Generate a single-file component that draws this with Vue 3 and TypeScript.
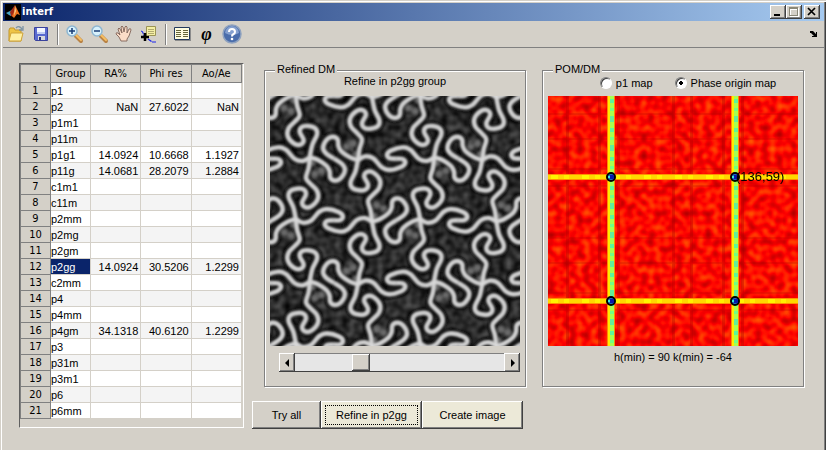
<script setup lang="ts">
import { ref } from 'vue'

interface Row {
  group: string
  ra?: string
  phi?: string
  ao?: string
}

const rows: Row[] = [
  { group: 'p1' },
  { group: 'p2', ra: 'NaN', phi: '27.6022', ao: 'NaN' },
  { group: 'p1m1' },
  { group: 'p11m' },
  { group: 'p1g1', ra: '14.0924', phi: '10.6668', ao: '1.1927' },
  { group: 'p11g', ra: '14.0681', phi: '28.2079', ao: '1.2884' },
  { group: 'c1m1' },
  { group: 'c11m' },
  { group: 'p2mm' },
  { group: 'p2mg' },
  { group: 'p2gm' },
  { group: 'p2gg', ra: '14.0924', phi: '30.5206', ao: '1.2299' },
  { group: 'c2mm' },
  { group: 'p4' },
  { group: 'p4mm' },
  { group: 'p4gm', ra: '34.1318', phi: '40.6120', ao: '1.2299' },
  { group: 'p3' },
  { group: 'p31m' },
  { group: 'p3m1' },
  { group: 'p6' },
  { group: 'p6mm' },
]

const selected = ref('p2gg')
const slice = ref(30)
const mapMode = ref('phase')

// Symmetry operations of the p2gg cell (cell edge 373 units, three units per pixel)
const cell = 373
const operations = [
  'matrix(1 0 0 1 0 0)',
  'matrix(-1 0 0 -1 384 376)',
  'matrix(1 0 0 -1 186 188)',
  'matrix(-1 0 0 1 570 -188)',
]
const copies: string[] = []
for (let i = -2; i <= 2; i++) {
  for (let j = -1; j <= 2; j++) {
    for (const op of operations) copies.push(`translate(${i * cell} ${j * cell}) ${op}`)
  }
}

// Smooth curve through a list of points (Catmull-Rom)
function curve(points: number[][]): string {
  let d = `M${points[0][0]} ${points[0][1]}`
  for (let i = 0; i < points.length - 1; i++) {
    const a = points[Math.max(0, i - 1)]
    const b = points[i]
    const c = points[i + 1]
    const e = points[Math.min(points.length - 1, i + 2)]
    d += `C${b[0] + (c[0] - a[0]) / 6} ${b[1] + (c[1] - a[1]) / 6} ${c[0] - (e[0] - b[0]) / 6} ${c[1] - (e[1] - b[1]) / 6} ${c[0]} ${c[1]}`
  }
  return d
}

const motif = [
  curve([[192, 188], [168, 172], [159, 155], [170, 131], [188, 122], [203, 130], [205, 150], [214, 166], [240, 184], [264, 192]]),
  curve([[264, 192], [285, 181], [310, 187], [335, 214], [358, 222], [393, 213], [406, 200], [398, 189], [378, 188]]),
  curve([[264, 192], [268, 160], [276, 130], [262, 112], [243, 92], [240, 68], [258, 46], [278, 42], [288, 56], [276, 80], [282, 95], [302, 98], [324, 90], [328, 72], [314, 42], [306, 4]]),
].join('')

const darkColumns = [19, 51, 70, 125, 143, 175, 194]
const darkRows = [18, 43, 73, 90, 142, 167, 197, 214]
const peaks = [
  { x: 63, y: 81 },
  { x: 187, y: 81 },
  { x: 63, y: 205 },
  { x: 187, y: 205 },
]
</script>

<template>
  <div class="window">
    <header class="titlebar">
      <svg class="app-icon" viewBox="0 0 16 16" aria-hidden="true">
        <rect width="16" height="16" fill="#000" />
        <path d="M1 9 5 7 8 5 6 12 4 11Z" fill="#4aa5c4" />
        <path d="M5 8 10 1 9 13 6 12Z" fill="#a52a16" />
        <path d="M10 1 12 5 15 11 12 10 9 14 7 12 9 8Z" fill="#ee7420" />
        <path d="M10 2 11 7 9 12Z" fill="#ffd08a" />
      </svg>
      <h1>interf</h1>
      <div class="window-buttons">
        <button type="button" aria-label="Minimize">
          <svg viewBox="0 0 12 10"><path d="M2 7h6v2H2z" fill="#000" /></svg>
        </button>
        <button type="button" aria-label="Maximize" disabled>
          <svg viewBox="0 0 12 10"><path d="M2 1h9v9H2zM3 3v6h7V3z" fill="#fff" fill-rule="evenodd" /><path d="M1 0h9v9H1zM2 2v6h7V2z" fill="#8b8878" fill-rule="evenodd" /></svg>
        </button>
        <button type="button" class="close" aria-label="Close">
          <svg viewBox="0 0 12 10"><path d="M2 1 9 8M9 1 2 8" stroke="#000" stroke-width="1.7" /></svg>
        </button>
      </div>
    </header>

    <nav class="toolbar" aria-label="Tools">
      <button type="button" aria-label="Open">
        <svg viewBox="0 0 20 20">
          <path d="M3 6 4 4h4l1 2h6v11H3z" fill="#eec445" stroke="#c1952a" />
          <path d="M3 17 5 9h12l-2 8z" fill="#fff0a2" stroke="#cfa338" />
          <path d="M10 4q3-3 6 1m1-3v4h-4" fill="none" stroke="#7c93a4" stroke-width="1.3" />
        </svg>
      </button>
      <button type="button" aria-label="Save">
        <svg viewBox="0 0 20 20">
          <path d="M3.500 3.500h13v13h-12l-1-1z" fill="#5b6ad0" stroke="#3a429c" />
          <path d="M6 4h8v6H6z" fill="#f4f6ff" />
          <path d="M6 8h8v2H6z" fill="#c3cef4" />
          <path d="M7 12h7v4H7z" fill="#d8d8dc" />
          <path d="M8 13h2v3H8z" fill="#26307c" />
        </svg>
      </button>
      <span class="separator"></span>
      <button type="button" aria-label="Zoom in">
        <svg viewBox="0 0 20 20">
          <path d="m12 12 5 5" stroke="#b98244" stroke-width="4" stroke-linecap="round" />
          <path d="m12 11 5 5" stroke="#f6bf62" stroke-width="2" stroke-linecap="round" />
          <circle cx="8" cy="7" r="5" fill="#d7f1fc" stroke="#8db6d1" stroke-width="1.5" />
          <path d="M5 7h6M8 4v6" stroke="#193d76" stroke-width="1.5" />
        </svg>
      </button>
      <button type="button" aria-label="Zoom out">
        <svg viewBox="0 0 20 20">
          <path d="m12 12 5 5" stroke="#b98244" stroke-width="4" stroke-linecap="round" />
          <path d="m12 11 5 5" stroke="#f6bf62" stroke-width="2" stroke-linecap="round" />
          <circle cx="8" cy="7" r="5" fill="#d7f1fc" stroke="#8db6d1" stroke-width="1.5" />
          <path d="M5 7h6" stroke="#193d76" stroke-width="1.5" />
        </svg>
      </button>
      <button type="button" aria-label="Pan">
        <svg viewBox="0 0 20 20">
          <path d="M7 17 5 13 2 10q0-2 2-1l2 2-2-6q1-2 2 0l2 4-1-6q1-2 2 0l1 5 1-5q1-2 2 0v6l2-4q2-1 2 1l-2 6-2 3v2z" fill="#fbdcc7" stroke="#7f6257" stroke-width=".9" />
        </svg>
      </button>
      <button type="button" aria-label="Data cursor">
        <svg viewBox="0 0 20 20">
          <path d="M2 7q2 0 3 5m4 3q3 2 4 3h5" fill="none" stroke="#1a24ee" stroke-width="1.2" stroke-dasharray="4 1" />
          <path d="M7.500 2.500h9v9h-6l-3 2z" fill="#f4efa4" stroke="#9b9455" />
          <path d="M9 5.500h6M9 7.500h6M9 9.500h6" stroke="#b3ab70" />
          <path d="M2 13h8M6 9v8" stroke="#000" stroke-width="2.5" />
        </svg>
      </button>
      <span class="separator"></span>
      <button type="button" aria-label="Table">
        <svg viewBox="0 0 20 20">
          <path d="M2.500 3.500h15v12h-15z" fill="#fffde0" stroke="#23395e" />
          <path d="M3 16.500h15M18.500 4v13" stroke="#8c8c8c" />
          <path d="M4 6.500h5M4 8.500h5M4 10.500h5M4 12.500h5M11 6.500h5M11 8.500h5M11 10.500h5M11 12.500h5" stroke="#66663a" />
        </svg>
      </button>
      <button type="button" class="phi" aria-label="Phase">φ</button>
      <button type="button" aria-label="Help">
        <svg viewBox="0 0 20 20">
          <circle cx="10" cy="10" r="9" fill="#4a6dab" stroke="#8fa2bf" stroke-width="1.5" />
          <path d="M3 9a7 7 0 0 1 14 0q-7 4-14 0" fill="#85a0cf" />
          <path d="M7 8q0-3 3-3t3 3q0 1.500-2 2.500-1 .5-1 2" fill="none" stroke="#fff" stroke-width="2" />
          <circle cx="10" cy="15" r="1.300" fill="#fff" />
        </svg>
      </button>
      <button type="button" class="dock" aria-label="Dock">
        <svg viewBox="0 0 8 8"><path d="M0 1h3l3 3V2h1v5H2V6h2L1 3H0z" fill="#000" /></svg>
      </button>
    </nav>

    <main class="content">
      <div class="table-frame">
        <table>
          <thead>
            <tr>
              <th class="index"></th>
              <th class="group">Group</th>
              <th>RA%</th>
              <th>Phi res</th>
              <th>Ao/Ae</th>
            </tr>
          </thead>
          <tbody>
            <tr v-for="(row, i) in rows" :key="row.group">
              <th scope="row">{{ i + 1 }}</th>
              <td class="name" :class="{ selected: row.group === selected }" @click="selected = row.group">{{ row.group }}</td>
              <td>{{ row.ra }}</td>
              <td>{{ row.phi }}</td>
              <td>{{ row.ao }}</td>
            </tr>
          </tbody>
        </table>
      </div>

      <div class="workspace">
        <div class="panels">
          <fieldset>
            <legend>Refined DM</legend>
            <div class="panel-head">Refine in p2gg group</div>
            <svg class="plot" viewBox="0 0 250 250" role="img" aria-label="Refined density map">
              <defs>
                <path id="motif" :d="motif" />
                <filter id="soft" x="0" y="0" width="750" height="750" filterUnits="userSpaceOnUse"><feGaussianBlur stdDeviation="2.4" /></filter>
                <filter id="halo" x="0" y="0" width="750" height="750" filterUnits="userSpaceOnUse"><feGaussianBlur stdDeviation="4" /></filter>
                <filter id="grain" x="0" y="0" width="1" height="1" color-interpolation-filters="sRGB">
                  <feTurbulence type="fractalNoise" baseFrequency=".14" numOctaves="1" seed="4" />
                  <feColorMatrix values=".45 0 0 0 -.05 .45 0 0 0 -.05 .45 0 0 0 -.05 0 0 0 0 1" />
                </filter>
              </defs>
              <rect width="250" height="250" filter="url(#grain)" />
              <g transform="scale(.3333)" fill="none" stroke-linejoin="round">
                <g filter="url(#halo)" stroke="#080808" stroke-width="32" opacity=".8">
                  <use v-for="(t, i) in copies" :key="i" href="#motif" :transform="t" />
                </g>
                <g filter="url(#halo)" fill="#6c6c6c" stroke="none">
                  <g v-for="(t, i) in copies" :key="i" :transform="t">
                    <circle cx="250" cy="142" r="11" />
                    <circle cx="229" cy="152" r="11" />
                    <circle cx="256" cy="174" r="9" />
                  </g>
                </g>
                <g filter="url(#soft)" stroke="#bcbcbc" stroke-width="14">
                  <use v-for="(t, i) in copies" :key="i" href="#motif" :transform="t" />
                </g>
                <g filter="url(#soft)" stroke="#f4f4f4" stroke-width="6" opacity=".6">
                  <use v-for="(t, i) in copies" :key="i" href="#motif" :transform="t" />
                </g>
              </g>
            </svg>
            <div class="slider">
              <button type="button" aria-label="Previous"><svg viewBox="0 0 5 8"><path d="M4 0v8L0 4z" /></svg></button>
              <input v-model="slice" type="range" min="0" max="100" aria-label="Slice" />
              <button type="button" aria-label="Next"><svg viewBox="0 0 5 8"><path d="M1 0v8l4-4z" /></svg></button>
            </div>
          </fieldset>

          <fieldset>
            <legend>POM/DM</legend>
            <div class="panel-head radios">
              <label><input v-model="mapMode" type="radio" name="map" value="p1" />p1 map</label>
              <label><input v-model="mapMode" type="radio" name="map" value="phase" />Phase origin map</label>
            </div>
            <svg class="plot" viewBox="0 0 250 250" role="img" aria-label="Phase origin map">
              <defs>
                <filter id="heat" x="0" y="0" width="1" height="1" color-interpolation-filters="sRGB">
                  <feTurbulence type="fractalNoise" baseFrequency=".14" numOctaves="1" seed="8" />
                  <feColorMatrix values=".9 0 0 0 .56 .9 0 0 0 -.42 0 0 0 0 0 0 0 0 0 1" />
                </filter>
                <pattern id="core" width="8" height="29" patternUnits="userSpaceOnUse">
                  <rect width="8" height="29" fill="#a5ff50" />
                  <rect y="3" width="8" height="4" fill="#5cf69b" />
                  <rect y="12" width="8" height="3" fill="#72ff82" />
                  <rect y="20" width="8" height="6" fill="#62ee9a" />
                </pattern>
                <pattern id="band" width="31" height="250" patternUnits="userSpaceOnUse">
                  <rect width="31" height="250" fill="#ffd800" />
                  <rect x="3" width="7" height="250" fill="#fff500" />
                  <rect x="16" width="5" height="250" fill="#fff000" />
                </pattern>
              </defs>
              <rect width="250" height="250" filter="url(#heat)" />
              <g fill="#a80000" opacity=".35">
                <rect v-for="x in darkColumns" :key="x" :x="x - 1" width="3" height="250" />
                <rect v-for="y in darkRows" :key="y" :y="y - 1" width="250" height="2" opacity=".6" />
              </g>
              <g v-for="y in [81, 205]" :key="y">
                <rect :y="y - 3" width="250" height="6" fill="#ff9000" />
                <rect :y="y - 2" width="250" height="4" fill="url(#band)" />
              </g>
              <g v-for="x in [63, 187]" :key="x">
                <rect :x="x - 4" width="8" height="250" fill="#ff8a00" />
                <rect :x="x - 3" width="6" height="250" fill="#ffec00" />
                <rect :x="x - 1" width="4" height="250" fill="url(#core)" />
              </g>
              <g v-for="(p, i) in peaks" :key="i">
                <circle :cx="p.x" :cy="p.y" r="4" fill="#1c6fd6" stroke="#000" stroke-width="2" />
                <rect :x="p.x - 3" :y="p.y - 1" width="2" height="2" fill="#36e9d9" />
                <rect :x="p.x - 1" :y="p.y - 2" width="4" height="4" fill="#0718a8" />
              </g>
              <text x="188" y="85">(136;59)</text>
            </svg>
            <p class="caption">h(min) = 90 k(min) = -64</p>
          </fieldset>
        </div>

        <div class="actions">
          <button type="button">Try all</button>
          <button type="button" class="pale focused">Refine in p2gg</button>
          <button type="button" class="pale">Create image</button>
        </div>
      </div>
    </main>
  </div>
</template>

<style>
body {
  background: #d4d0c8;
}
</style>

<style scoped>
.window,
.window * {
  box-sizing: border-box;
}

.window {
  display: flex;
  flex-direction: column;
  min-height: 100vh;
  padding: 3px 2px 0 3px;
  background: #d4d0c8;
  box-shadow: inset 1px 1px #d4d0c8, inset 2px 2px #fff, inset -1px 0 #404040, inset -2px 0 #808080;
  color: #000;
  font: 11px/12px 'Liberation Sans', Arial, sans-serif;
}

button {
  padding: 0;
  border: 0;
  border-radius: 0;
  background: #d4d0c8;
  color: #000;
  font: inherit;
}

.titlebar {
  display: flex;
  align-items: center;
  height: 18px;
  padding: 0 4px 0 2px;
  background: linear-gradient(90deg, #0a246a, #a6caf0);
}

.app-icon {
  width: 16px;
  height: 16px;
}

h1 {
  flex: 1;
  margin: 0 0 0 1px;
  color: #fff;
  font: bold 11px/16px 'DejaVu Sans Condensed', 'DejaVu Sans', sans-serif;
}

.window-buttons {
  display: flex;
}

.window-buttons button {
  width: 16px;
  height: 14px;
  padding: 2px;
  box-shadow: inset -1px -1px #404040, inset 1px 1px #fff, inset -2px -2px #808080;
}

.window-buttons .close {
  margin-left: 2px;
}

.window-buttons svg {
  display: block;
  width: 12px;
  height: 10px;
}

.toolbar {
  display: flex;
  align-items: center;
  height: 27px;
  border-bottom: 1px solid #808080;
}

.toolbar button {
  display: grid;
  place-items: center;
  width: 25px;
  height: 24px;
}

.toolbar svg {
  width: 20px;
  height: 20px;
}

.separator {
  width: 2px;
  height: 21px;
  margin: 0 2px 0 4px;
  border-left: 1px solid #808080;
  border-right: 1px solid #fff;
}

.toolbar .phi {
  font: italic bold 18px/20px 'Liberation Serif', serif;
}

.toolbar .dock {
  width: 20px;
  margin-left: auto;
}

.dock svg {
  width: 8px;
  height: 8px;
}

.content {
  display: flex;
  align-items: flex-start;
  gap: 8px;
  padding: 15px 20px 20px 16px;
}

.table-frame {
  width: 225px;
  padding: 0 1px 8px 0;
  border: 1px solid;
  border-color: #606060 #fff #fff #606060;
}

table {
  width: 100%;
  border-collapse: collapse;
  table-layout: fixed;
}

.index {
  width: 30px;
}

.group {
  width: 40px;
}

th {
  height: 16px;
  padding: 0;
  border: 1px solid #808080;
  background: #d4d0c8;
  font: 11px/12px 'DejaVu Sans Condensed', 'DejaVu Sans', sans-serif;
}

thead th {
  height: 18px;
}

td {
  height: 16px;
  padding: 0 2px;
  border: 1px solid #d4d0c8;
  background: #fff;
  text-align: right;
  line-height: 12px;
}

tr:nth-child(even) td {
  background: #f4f4f4;
}

td.name {
  text-align: left;
  padding: 0;
}

tr td.selected {
  background: #0a246a;
  color: #fff;
}

.workspace {
  flex: 1;
  min-width: 0;
}

.panels {
  display: grid;
  grid-template-columns: 1fr 1fr;
  gap: 16px;
  padding-left: 12px;
}

fieldset {
  min-width: 0;
  margin: 0;
  padding: 0 5px 14px;
  border: 1px solid #808080;
  box-shadow: inset 1px 1px #fff, 1px 1px #fff;
}

legend {
  height: 14px;
  margin-left: 5px;
  padding: 0 2px;
  background: #d4d0c8;
  line-height: 13px;
}

.panel-head {
  height: 19px;
  line-height: 8px;
  text-align: center;
}

.radios {
  display: flex;
  justify-content: center;
  gap: 22px;
  padding-left: 30px;
}

label {
  display: flex;
  align-items: center;
  gap: 4px;
  height: 12px;
}

input[type='radio'] {
  appearance: none;
  width: 12px;
  height: 12px;
  margin: 0;
  border: 1px solid;
  border-color: #808080 #fff #fff #808080;
  border-radius: 50%;
  background: #fff;
  box-shadow: inset 1px 1px #404040;
}

input[type='radio']:checked {
  background: radial-gradient(circle, #000 2px, #fff 2px);
}

.plot {
  display: block;
  width: 100%;
  height: auto;
  overflow: hidden;
}

.plot text {
  font: 13px 'Liberation Sans', Arial, sans-serif;
}

.slider {
  display: flex;
  height: 19px;
  margin: 7px 0 0 9px;
}

.slider button {
  display: grid;
  place-items: center;
  width: 16px;
  box-shadow: inset -1px -1px #404040, inset 1px 1px #fff, inset -2px -2px #808080;
}

.slider svg {
  width: 5px;
  height: 8px;
}

.slider input {
  appearance: none;
  flex: 1;
  min-width: 0;
  height: 19px;
  margin: 0;
  border: 1px solid;
  border-color: #808080 transparent #404040;
  border-width: 1px 0;
  background: #e6e6e6;
}

.slider input::-webkit-slider-thumb {
  appearance: none;
  width: 18px;
  height: 17px;
  background: #d4d0c8;
  box-shadow: inset -1px -1px #404040, inset 1px 1px #fff, inset -2px -2px #808080;
}

.caption {
  margin: 5px 0 0;
  text-align: center;
}

.actions {
  display: flex;
  margin-top: 14px;
}

.actions button {
  width: 69px;
  height: 28px;
  box-shadow: inset -1px -1px #404040, inset 1px 1px #fff, inset -2px -2px #808080;
}

.actions .pale {
  width: 101px;
  background: #ece9d8;
}

.actions .focused {
  outline: 1px dotted #000;
  outline-offset: -5px;
}
</style>
